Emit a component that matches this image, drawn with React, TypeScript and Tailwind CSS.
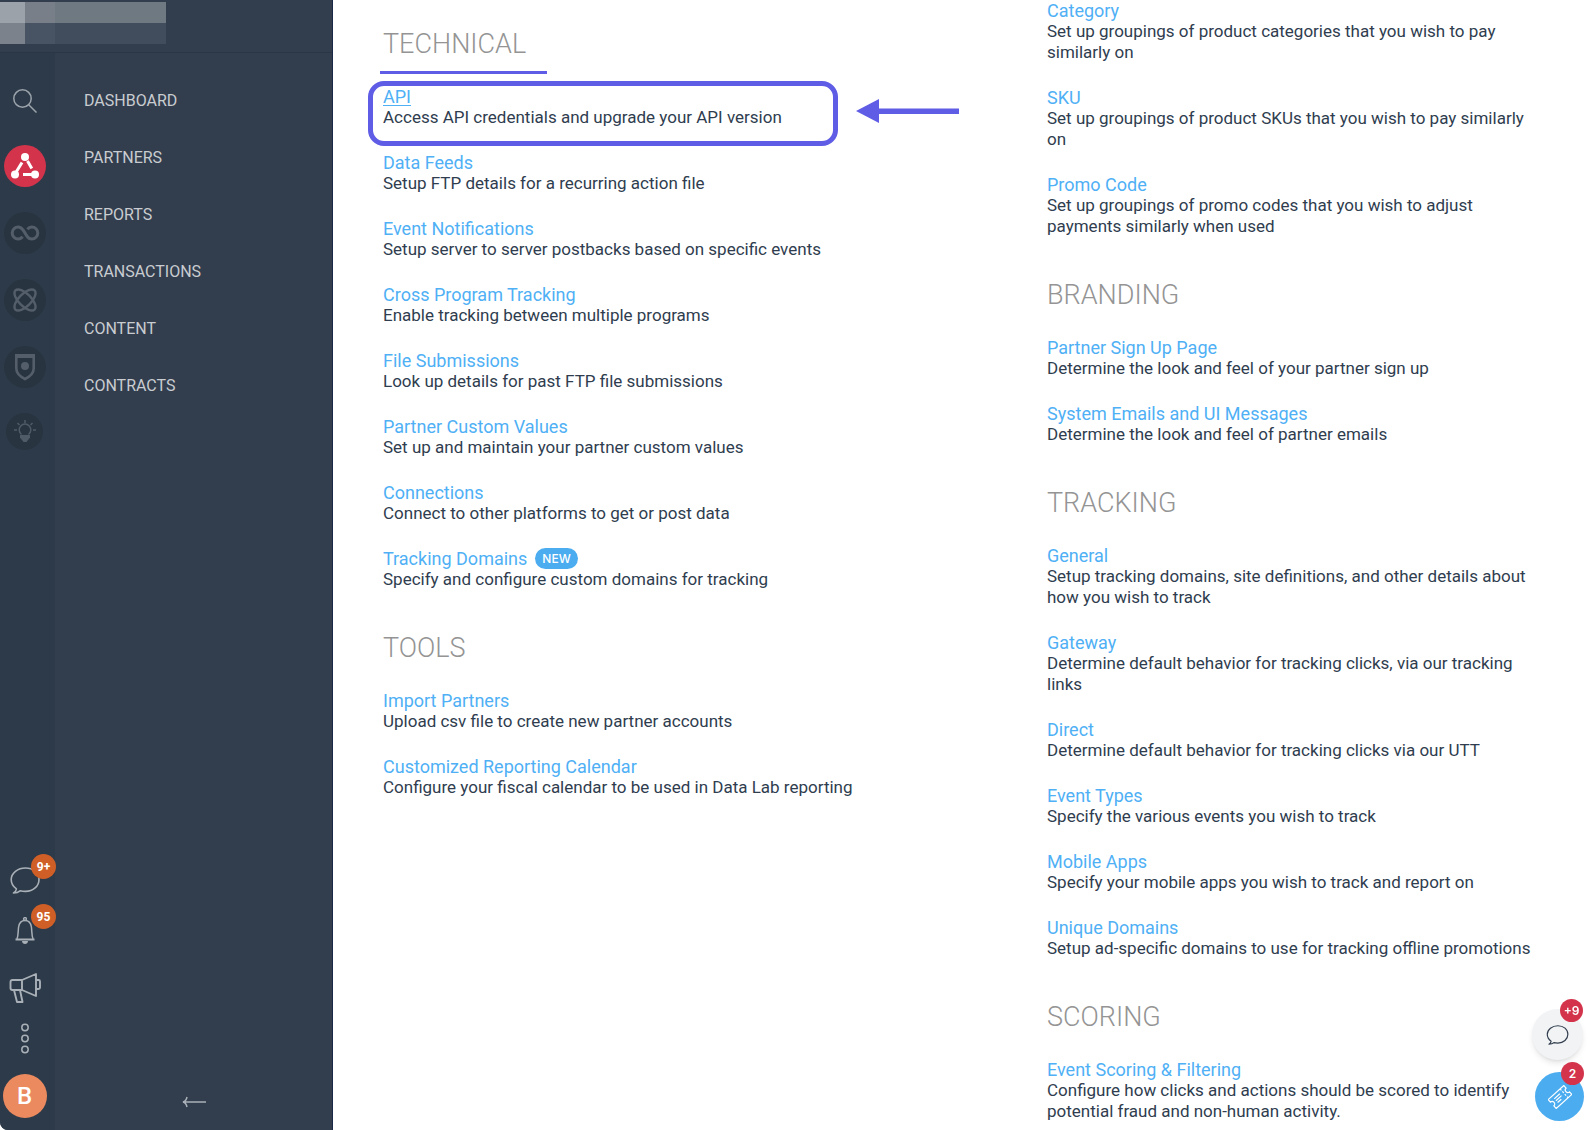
import type { ReactNode } from "react";

type Entry = { title: string; text: string; isNew?: boolean; active?: boolean };

const menu = ["Dashboard", "Partners", "Reports", "Transactions", "Content", "Contracts"];

const technical: Entry[] = [
  { title: "API", text: "Access API credentials and upgrade your API version", active: true },
  { title: "Data Feeds", text: "Setup FTP details for a recurring action file" },
  { title: "Event Notifications", text: "Setup server to server postbacks based on specific events" },
  { title: "Cross Program Tracking", text: "Enable tracking between multiple programs" },
  { title: "File Submissions", text: "Look up details for past FTP file submissions" },
  { title: "Partner Custom Values", text: "Set up and maintain your partner custom values" },
  { title: "Connections", text: "Connect to other platforms to get or post data" },
  { title: "Tracking Domains", text: "Specify and configure custom domains for tracking", isNew: true },
];

const tools: Entry[] = [
  { title: "Import Partners", text: "Upload csv file to create new partner accounts" },
  { title: "Customized Reporting Calendar", text: "Configure your fiscal calendar to be used in Data Lab reporting" },
];

const groupings: Entry[] = [
  { title: "Category", text: "Set up groupings of product categories that you wish to pay similarly on" },
  { title: "SKU", text: "Set up groupings of product SKUs that you wish to pay similarly on" },
  { title: "Promo Code", text: "Set up groupings of promo codes that you wish to adjust payments similarly when used" },
];

const branding: Entry[] = [
  { title: "Partner Sign Up Page", text: "Determine the look and feel of your partner sign up" },
  { title: "System Emails and UI Messages", text: "Determine the look and feel of partner emails" },
];

const tracking: Entry[] = [
  { title: "General", text: "Setup tracking domains, site definitions, and other details about how you wish to track" },
  { title: "Gateway", text: "Determine default behavior for tracking clicks, via our tracking links" },
  { title: "Direct", text: "Determine default behavior for tracking clicks via our UTT" },
  { title: "Event Types", text: "Specify the various events you wish to track" },
  { title: "Mobile Apps", text: "Specify your mobile apps you wish to track and report on" },
  { title: "Unique Domains", text: "Setup ad-specific domains to use for tracking offline promotions" },
];

const scoring: Entry[] = [
  {
    title: "Event Scoring & Filtering",
    text: "Configure how clicks and actions should be scored to identify potential fraud and non-human activity.",
  },
];

function EntryItem({ entry }: { entry: Entry }) {
  return (
    <li className="relative">
      {entry.active && <Callout />}
      <div className="flex items-center gap-2 text-lg leading-[21px]">
        <a href="#" className={entry.active ? "text-[#4fb0f5] underline underline-offset-2" : "text-[#4fb0f5]"}>
          {entry.title}
        </a>
        {entry.isNew && (
          <span className="rounded-full bg-[#4bacf0] px-[7px] font-[Inter,sans-serif] text-xs font-medium leading-[21px] text-white">
            NEW
          </span>
        )}
      </div>
      <p className="text-[17px] leading-[21px] text-[#2f3d4f]">{entry.text}</p>
    </li>
  );
}

function Callout() {
  return (
    <>
      <div className="pointer-events-none absolute -left-[15px] -top-[5px] h-[65px] w-[470px] rounded-2xl border-5 border-[#5f5ce5]" />
      <svg className="absolute left-[472px] top-[12px]" width="104" height="26" viewBox="0 0 104 26" fill="#5f5ce5">
        <path d="M1 13 24 1v24z" />
        <path d="M22 10.500h82v5.500H22z" />
      </svg>
    </>
  );
}

function Section({ title, entries, marked }: { title?: string; entries: Entry[]; marked?: boolean }) {
  return (
    <section>
      {title && (
        <h2 className="relative mb-[25px] text-[27px] font-light leading-[33px] text-[#949494]">
          {title}
          {marked && <span className="absolute -bottom-[13px] -left-[3px] h-[3px] w-[167px] bg-[#5f5ce5]" />}
        </h2>
      )}
      <ul className="space-y-6">
        {entries.map((entry) => (
          <EntryItem key={entry.title} entry={entry} />
        ))}
      </ul>
    </section>
  );
}

function AppButton({ label, active, children }: { label: string; active?: boolean; children: ReactNode }) {
  return (
    <button
      type="button"
      aria-label={label}
      className={
        active
          ? "flex size-[42px] items-center justify-center rounded-full bg-[#d3344b] text-white"
          : "flex size-[42px] items-center justify-center rounded-full bg-[#28343f] text-[#535e6a]"
      }
    >
      {children}
    </button>
  );
}

function RailButton({ label, badge, children }: { label: string; badge?: string; children: ReactNode }) {
  return (
    <button
      type="button"
      aria-label={label}
      className="relative flex h-[50px] w-[49px] items-center justify-center text-[#a9b0b7]"
    >
      {children}
      {badge && (
        <span className="absolute -right-[7px] -top-px flex size-[25px] items-center justify-center rounded-full bg-[#d05f27] text-xs font-bold text-white">
          {badge}
        </span>
      )}
    </button>
  );
}

function Rail() {
  return (
    <div className="flex w-[55px] shrink-0 flex-col justify-between bg-[#2d3a49] pb-3 pt-9">
      <div className="flex w-[49px] flex-col items-center">
        <button type="button" aria-label="Search" className="mb-8 text-[#9ba3ab]">
          <svg width="24" height="24" viewBox="0 0 24 24" fill="none" stroke="currentColor" strokeWidth="1.500">
            <circle cx="9.500" cy="9.500" r="8.700" />
            <path d="m15.700 15.700 7.800 7.800" />
          </svg>
        </button>
        <div className="flex flex-col items-center gap-[25px]">
          <AppButton label="Performance" active>
            <svg width="30" height="28" viewBox="0 0 30 28" fill="currentColor" stroke="currentColor" strokeWidth="3">
              <g stroke="none">
                <circle cx="15" cy="5" r="4" />
                <circle cx="5" cy="22.500" r="4" />
                <circle cx="25" cy="22.500" r="4" />
              </g>
              <path d="M6.500 19.500 12 10.500M17.500 9l4.300 7.500M13 22.500H23" />
            </svg>
          </AppButton>
          <AppButton label="Optimize">
            <svg width="30" height="16" viewBox="0 0 30 16" fill="none" stroke="currentColor" strokeWidth="3">
              <path d="M12.600 11.800C11.400 13.300 10 14 8.200 14a6 6 0 1 1 0-12c2.300 0 3.700 1.300 5 3.200l3.600 5.600c1.300 1.900 2.700 3.200 5 3.200a6 6 0 1 0 0-12c-1.800 0-3.200.7-4.400 2.200" />
            </svg>
          </AppButton>
          <AppButton label="Creator">
            <svg width="24" height="24" viewBox="0 0 24 24" fill="none" stroke="currentColor" strokeWidth="2.400">
              <ellipse cx="12" cy="12" rx="13.500" ry="6.200" transform="rotate(45 12 12)" />
              <ellipse cx="12" cy="12" rx="13.500" ry="6.200" transform="rotate(-45 12 12)" />
            </svg>
          </AppButton>
          <AppButton label="Protect">
            <svg width="22" height="28" viewBox="0 0 22 28" fill="none" stroke="currentColor" strokeWidth="2.600">
              <path d="M2.300 3h17.400v12.500c0 4.500-3.700 8-8.700 10.500-5-2.500-8.700-6-8.700-10.500z" />
              <path d="M1 3h20" strokeWidth="4" />
              <circle cx="11" cy="13" r="4" fill="currentColor" stroke="none" />
            </svg>
          </AppButton>
          <button
            type="button"
            aria-label="Ideas"
            className="flex size-[37px] items-center justify-center rounded-full bg-[#28343f] text-[#4f5b67]"
          >
            <svg width="22" height="23" viewBox="0 0 22 23" fill="none" stroke="currentColor" strokeWidth="1.500">
              <path d="M7.500 14.500a5.800 5.800 0 1 1 7 0" />
              <path d="M11 0v3M3.500 3l2 2M18.500 3l-2 2M0 10h3M19 10h3" />
              <path d="M6 15h10v2.500L12.500 22h-3L6 17.500z" fill="currentColor" stroke="none" />
            </svg>
          </button>
        </div>
      </div>

      <div className="flex w-[49px] flex-col items-center">
        <RailButton label="Messages" badge="9+">
          <ChatIcon className="h-[27px] w-[30px]" />
        </RailButton>
        <RailButton label="Notifications" badge="95">
          <svg width="20" height="27" viewBox="0 0 20 27" fill="none" stroke="currentColor" strokeWidth="1.500">
            <path d="M2 22C3.500 18 3 14 3.600 10 4.300 5.500 6.500 3.500 10 3.500s5.700 2 6.400 6.500C17 14 16.500 18 18 22" />
            <path d="M.5 22.500h19" strokeWidth="2" />
            <circle cx="10" cy="2" r="1.400" />
            <path d="M7 24h6c0 2-1.500 3-3 3s-3-1-3-3z" fill="currentColor" stroke="none" />
          </svg>
        </RailButton>
        <div className="mt-2">
          <RailButton label="Announcements">
            <svg
              width="32"
              height="30"
              viewBox="0 0 32 30"
              fill="none"
              stroke="currentColor"
              strokeWidth="1.900"
              strokeLinejoin="round"
            >
              <path d="M13 7H3.500Q1.500 7 1.500 9v6q0 2 2 2H13zM13 7l14-6v22l-14-6M27 7h2.500q1.500 0 1.500 1.500v6q0 1.500-1.500 1.500H27" />
              <path d="m5 17 3 12h5.500l-2.500-12" />
            </svg>
          </RailButton>
        </div>
        <RailButton label="More">
          <svg width="8" height="31" viewBox="0 0 8 31" fill="none" stroke="currentColor" strokeWidth="1.500">
            <circle cx="4" cy="4.500" r="3.200" />
            <circle cx="4" cy="15.500" r="3.200" />
            <circle cx="4" cy="26.500" r="3.200" />
          </svg>
        </RailButton>
        <button
          type="button"
          aria-label="Account"
          className="mt-[11px] size-11 rounded-full bg-[#eb8a5f] text-2xl font-medium text-white"
        >
          B
        </button>
      </div>
    </div>
  );
}

function ChatIcon({ className }: { className: string }) {
  return (
    <svg className={className} viewBox="0 0 30 27" fill="none" stroke="currentColor" strokeWidth="1.600" strokeLinejoin="round">
      <path d="M15.500 1C7.800 1 1.200 6 1.200 12.500c0 4 2 7.200 5.200 9.300C6.200 23.500 5.200 25 3.500 26c2.700 0 5-.7 6.600-2.200 1.600.4 3.400.6 5.400.6 7.700 0 13.500-5.200 13.500-11.900S23.200 1 15.500 1z" />
    </svg>
  );
}

function Sidebar() {
  return (
    <aside className="sticky top-0 flex h-screen w-[333px] shrink-0 flex-col overflow-hidden rounded-bl-lg border-r border-[#1b2748] bg-[#323e4e]">
      <div className="h-[53px] shrink-0 border-b border-[#2a3644] pt-[2px]">
        <div className="grid h-[42px] w-[166px] grid-cols-[25px_30px_1fr] grid-rows-2">
          <div className="bg-[#9ba2a9]" />
          <div className="bg-[#787f89]" />
          <div className="bg-[#6f7982]" />
          <div className="bg-[#7c828c]" />
          <div className="bg-[#485463]" />
          <div className="bg-[#414d5c]" />
        </div>
      </div>
      <div className="flex flex-1">
        <Rail />
        <nav className="flex flex-1 flex-col justify-between pb-4 pl-[29px] pt-9">
          <ul className="space-y-[33px]">
            {menu.map((item) => (
              <li key={item} className="leading-6">
                <a href="#" className="uppercase text-[#c9ccd0]">
                  {item}
                </a>
              </li>
            ))}
          </ul>
          <button type="button" aria-label="Collapse menu" className="ml-[98px] w-6 text-[#a9b0b7]">
            <svg width="24" height="24" viewBox="0 0 24 24" fill="none" stroke="currentColor" strokeWidth="1.500">
              <path d="M1 12h23M5 7c-.5 2.500-2 4.500-4 5 2 .5 3.500 2.500 4 5" />
            </svg>
          </button>
        </nav>
      </div>
    </aside>
  );
}

function FloatingButtons() {
  return (
    <div className="fixed bottom-[9px] right-1 flex flex-col items-end gap-3">
      <button
        type="button"
        aria-label="Open chat"
        className="relative mr-px flex size-[51px] items-center justify-center rounded-full bg-[#f1f3f5] text-[#323e4e] shadow-md"
      >
        <ChatIcon className="h-5 w-[23px]" />
        <FloatingBadge>+9</FloatingBadge>
      </button>
      <button
        type="button"
        aria-label="Open tickets"
        className="relative flex size-[49px] items-center justify-center rounded-full bg-[#4bacf0] text-white"
      >
        <svg width="24" height="24" viewBox="0 0 24 24" fill="none" stroke="currentColor" strokeWidth="1.200">
          <g transform="rotate(-42 12 12)">
            <path d="M1.500 6h21v3.500a2.500 2.500 0 0 0 0 5V18h-21v-3.500a2.500 2.500 0 0 0 0-5z" />
            <path d="M17.500 6v12" strokeDasharray="2 1.500" />
            <path d="M6.500 9.500h7.500M6.500 12h7.500M6.500 14.500h5" />
          </g>
        </svg>
        <FloatingBadge>2</FloatingBadge>
      </button>
    </div>
  );
}

function FloatingBadge({ children }: { children: ReactNode }) {
  return (
    <span className="absolute -top-[10px] right-0 flex size-[23px] items-center justify-center rounded-full bg-[#d3344b] font-[Inter,sans-serif] text-xs font-semibold text-white">
      {children}
    </span>
  );
}

export default function App() {
  return (
    <div className="flex min-h-screen bg-white font-[Roboto,sans-serif]">
      <Sidebar />
      <main className="grid flex-1 grid-cols-2 gap-x-[169px] pl-[50px] pr-[46px]">
        <div className="space-y-[42px] pt-7">
          <Section title="TECHNICAL" entries={technical} marked />
          <Section title="TOOLS" entries={tools} />
        </div>
        <div className="space-y-[42px]">
          <Section entries={groupings} />
          <Section title="BRANDING" entries={branding} />
          <Section title="TRACKING" entries={tracking} />
          <Section title="SCORING" entries={scoring} />
        </div>
      </main>
      <FloatingButtons />
    </div>
  );
}
